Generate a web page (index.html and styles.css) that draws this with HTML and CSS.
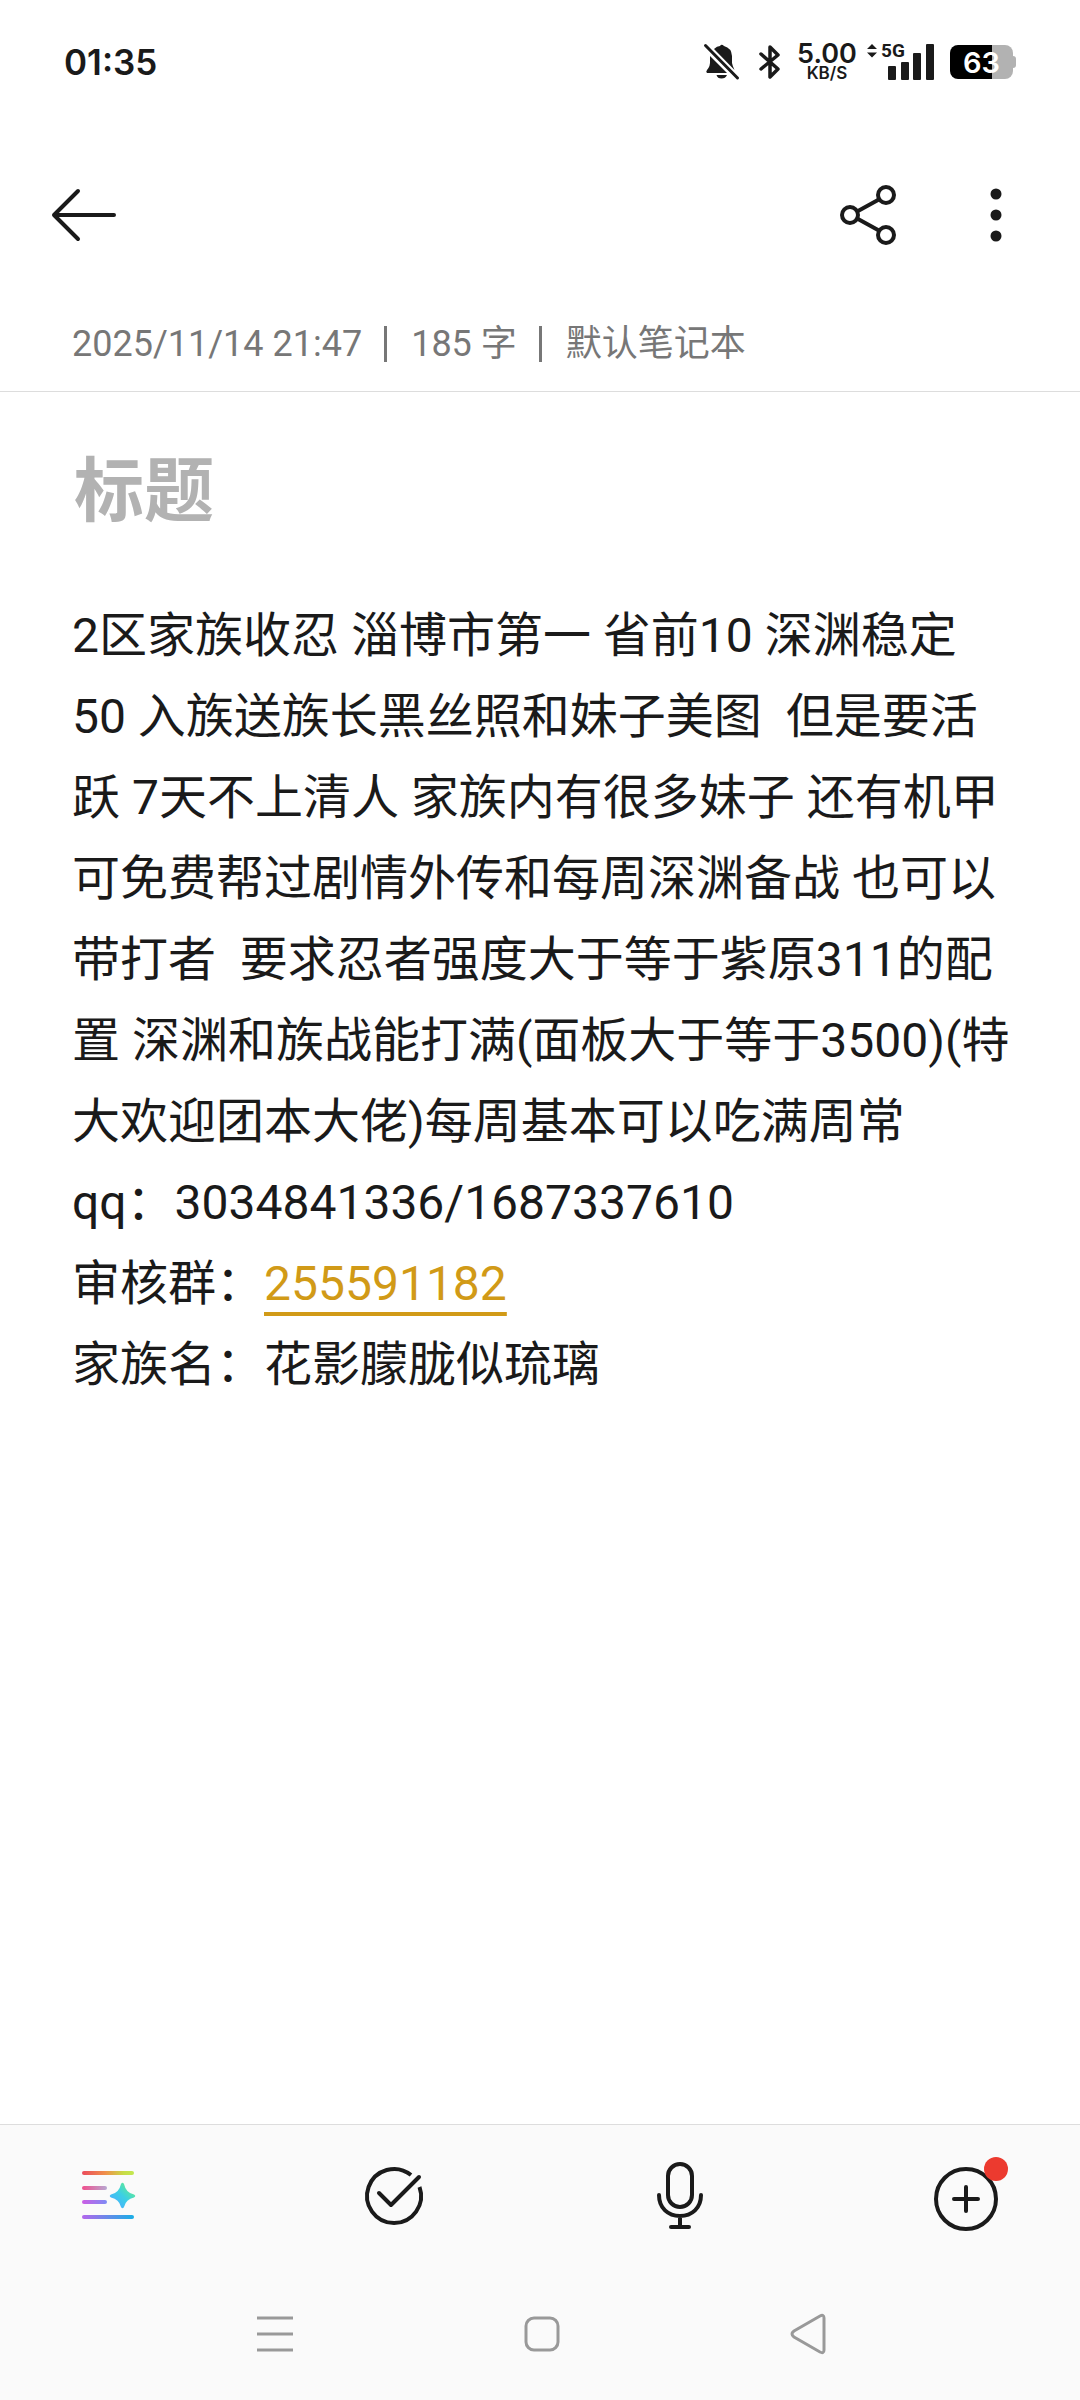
FILE: index.html
```html
<!DOCTYPE html>
<html lang="zh-CN">
<head>
<meta charset="utf-8">
<meta name="viewport" content="width=device-width, initial-scale=1">
<title>笔记</title>
<link rel="stylesheet" href="styles.css">
</head>
<body>
<div class="status">
  <time class="clock">01:35</time>
  <div class="status-icons">
    <svg class="bell" viewBox="0 0 36 36" aria-hidden="true">
      <path d="M10 5Q13 2 16 2Q17.500 -.5 20 2Q27.500 4 28 12V19Q28.500 22 30.500 26ZM6 12L23 29H3Q1.500 28 3 26Q6.500 22 6 17ZM12.500 31H23Q21.500 34.500 17.500 34.500T12.500 31Z" fill="#1a1a1a"/>
      <path d="M1.500 1.500L33.500 34" stroke="#1a1a1a" stroke-width="3" stroke-linecap="round"/>
    </svg>
    <svg class="bluetooth" viewBox="0 0 22 38" aria-hidden="true">
      <path d="M2 11L19 26L11 34V4L19 12L2 26" fill="none" stroke="#1a1a1a" stroke-width="3.500" stroke-linejoin="round" stroke-linecap="round"/>
    </svg>
    <div class="speed"><span class="speed-value">5.00</span><span class="speed-unit">KB/S</span></div>
    <div class="signal">
      <svg class="signal-bars" viewBox="0 0 68 38" aria-hidden="true">
        <path d="M1 6L6 1L11 6ZM1 9.500H11L6 14.500Z" fill="#1a1a1a"/>
        <g fill="#1a1a1a"><rect x="22" y="23" width="8" height="14" rx="1"/><rect x="35" y="19" width="8" height="18" rx="1"/><rect x="47" y="10" width="8" height="27" rx="1"/><rect x="60" y="1" width="8" height="36" rx="1"/></g>
      </svg>
      <span class="network">5G</span>
    </div>
    <div class="battery">63</div>
  </div>
</div>

<header class="header">
  <button class="icon-button" type="button" aria-label="返回">
    <svg viewBox="0 0 72 72"><path d="M66 36H6M30 12L6 36L30 60" class="line"/></svg>
  </button>
  <div class="header-actions">
    <button class="icon-button" type="button" aria-label="分享">
      <svg viewBox="0 0 72 72"><g class="line"><circle cx="18" cy="36" r="8"/><circle cx="54" cy="16" r="8"/><circle cx="54" cy="56" r="8"/><path d="M26 32L46 21M26 40L46 51"/></g></svg>
    </button>
    <button class="icon-button" type="button" aria-label="更多">
      <svg viewBox="0 0 72 72"><g fill="#1a1a1a"><circle cx="36" cy="15" r="5.500"/><circle cx="36" cy="36" r="5.500"/><circle cx="36" cy="57" r="5.500"/></g></svg>
    </button>
  </div>
</header>

<div class="meta">
  <time>2025/11/14 21:47</time>
  <span class="meta-item">185 字</span>
  <span class="meta-item">默认笔记本</span>
</div>

<main class="note">
  <input class="title" type="text" placeholder="标题" aria-label="标题">
  <p class="content">2区家族收忍 淄博市第一 省前10 深渊稳定
50 入族送族长黑丝照和妹子美图  但是要活
跃 7天不上清人 家族内有很多妹子 还有机甲
可免费帮过剧情外传和每周深渊备战 也可以
带打者  要求忍者强度大于等于紫原311的配
置 深渊和族战能打满(面板大于等于3500)(特
大欢迎团本大佬)每周基本可以吃满周常
qq：3034841336/1687337610
审核群：<a href="#">255591182</a>
家族名：花影朦胧似琉璃</p>
</main>

<footer class="footer">
  <div class="tools">
    <button class="icon-button" type="button" aria-label="智能排版">
      <svg viewBox="0 0 72 72">
        <defs>
          <linearGradient id="warm" gradientUnits="userSpaceOnUse" x1="10" x2="62" y1="0" y2="0"><stop stop-color="#eb4b5c"/><stop offset=".45" stop-color="#f0904a"/><stop offset=".8" stop-color="#c8dc46"/><stop offset="1" stop-color="#c2e850"/></linearGradient>
          <linearGradient id="pink" gradientUnits="userSpaceOnUse" x1="10" x2="35" y1="0" y2="0"><stop stop-color="#f04f8c"/><stop offset="1" stop-color="#b8a8d2"/></linearGradient>
          <linearGradient id="violet" gradientUnits="userSpaceOnUse" x1="10" x2="35" y1="0" y2="0"><stop stop-color="#cc5de4"/><stop offset="1" stop-color="#7d8bf5"/></linearGradient>
          <linearGradient id="cool" gradientUnits="userSpaceOnUse" x1="10" x2="62" y1="0" y2="0"><stop stop-color="#b466ec"/><stop offset="1" stop-color="#18afe6"/></linearGradient>
          <linearGradient id="spark" x1="0" x2="1" y1="1" y2="0"><stop offset=".2" stop-color="#46b4fa"/><stop offset=".5" stop-color="#3cd0e4"/><stop offset=".8" stop-color="#5ce69e"/></linearGradient>
        </defs>
        <rect x="10" y="11" width="52" height="4" rx="2" fill="url(#warm)"/>
        <rect x="10" y="26" width="25" height="4" rx="2" fill="url(#pink)"/>
        <rect x="10" y="40" width="25" height="4" rx="2" fill="url(#violet)"/>
        <rect x="10" y="55" width="52" height="4" rx="2" fill="url(#cool)"/>
        <path d="M49 24Q50.500 21.500 52 24Q54 33 62 34.500Q64.500 36 62 37.500Q54 39 52 47Q50.500 49.500 49 47Q47 39 39 37.500Q36.500 36 39 34.500Q47 33 49 24Z" fill="url(#spark)"/>
      </svg>
    </button>
    <button class="icon-button" type="button" aria-label="待办">
      <svg viewBox="0 0 72 72"><g class="line"><path d="M53 15A27 27 0 1 0 61.500 27" stroke-linecap="butt"/><path d="M21 33L33 45L61 17"/></g></svg>
    </button>
    <button class="icon-button" type="button" aria-label="录音">
      <svg viewBox="0 0 72 72"><g class="line"><rect x="24" y="4" width="24" height="43" rx="12"/><path d="M15 35C15 48 24 56 36 56S57 48 57 35M36 56V67M27 67H45"/></g></svg>
    </button>
    <button class="icon-button" type="button" aria-label="添加">
      <svg viewBox="0 0 72 72"><g class="line"><circle cx="36" cy="39" r="30"/><path d="M24 39H48M36 27V51"/></g></svg>
      <span class="badge"></span>
    </button>
  </div>
  <nav class="system-nav" aria-label="系统导航">
    <button type="button" aria-label="最近任务"><svg viewBox="0 0 36 44"><path d="M0 6H36M0 22H36M0 38H36"/></svg></button>
    <button type="button" aria-label="主屏幕"><svg viewBox="0 0 36 44"><rect x="2" y="6" width="32" height="32" rx="8"/></svg></button>
    <button type="button" aria-label="后退"><svg viewBox="0 0 36 44"><path d="M29 4Q33 2 33 6V38Q33 42 29 40L3 25Q-1 22 3 19Z"/></svg></button>
  </nav>
</footer>
</body>
</html>
```

FILE: styles.css
```css
* { box-sizing: border-box; }

body {
  margin: 0;
  min-height: 100vh;
  display: flex;
  flex-direction: column;
  background: #fff;
  color: #1a1a1a;
  font-family: Roboto, "Noto Sans CJK SC", sans-serif;
}

button {
  padding: 0;
  border: 0;
  background: none;
  position: relative;
}

svg { display: block; overflow: visible; }

.line {
  fill: none;
  stroke: #1a1a1a;
  stroke-width: 4;
  stroke-linecap: round;
  stroke-linejoin: round;
}

.status {
  height: 124px;
  padding: 0 64px;
  display: flex;
  align-items: center;
  justify-content: space-between;
  font-family: Inter, Roboto, sans-serif;
  font-weight: 600;
}

.clock { font-size: 35px; }

.status-icons {
  display: flex;
  align-items: center;
}

.bell { width: 36px; height: 36px; }
.bluetooth { width: 22px; height: 38px; margin-left: 19px; }

.speed {
  width: 60px;
  margin-left: 16px;
  display: flex;
  flex-direction: column;
  align-items: center;
}

.speed-value { font-size: 27px; line-height: 22px; }
.speed-unit { font-size: 17px; line-height: 16px; }

.signal {
  position: relative;
  margin-left: 9px;
}

.signal-bars { width: 68px; height: 38px; }

.network {
  position: absolute;
  left: 15px;
  top: 0;
  font: 700 19px/16px "Liberation Sans Narrow", Roboto, sans-serif;
}

.battery {
  position: relative;
  width: 63px;
  height: 34px;
  margin: 0 3px 0 16px;
  border-radius: 8px;
  background: linear-gradient(to right, #000 42px, #b2b2b2 42px);
  color: #fff;
  font-size: 29px;
  line-height: 35px;
  text-align: center;
}

.battery::after {
  content: "";
  position: absolute;
  left: 63px;
  top: 11px;
  width: 3px;
  height: 12px;
  border-radius: 0 3px 3px 0;
  background: #b2b2b2;
}

.header {
  height: 182px;
  padding: 0 48px;
  display: flex;
  align-items: center;
  justify-content: space-between;
}

.header-actions { display: flex; gap: 56px; }

.icon-button, .icon-button svg { width: 72px; height: 72px; }

.meta {
  height: 86px;
  padding: 0 72px 10px;
  display: flex;
  align-items: center;
  border-bottom: 1px solid #ddd;
  color: #777;
  font-size: 36px;
  line-height: 36px;
}

.meta-item {
  margin-left: 22px;
  padding-left: 24px;
  border-left: 3px solid #777;
}

.note {
  flex: 1;
  padding: 48px 72px;
}

.title {
  display: block;
  width: 100%;
  height: 104px;
  padding: 0 2px;
  border: 0;
  outline: 0;
  background: none;
  font: 700 70px/104px Roboto, "Noto Sans CJK SC", sans-serif;
}

.title::placeholder { color: #b2b2b2; opacity: 1; }

.content {
  margin: 51px 0 0;
  font-size: 48px;
  line-height: 81px;
  white-space: pre;
}

.content a {
  color: #d19a17;
  text-decoration: underline 4px;
  text-underline-offset: 12px;
}

.footer {
  border-top: 1px solid #ddd;
  background: #fafafa;
}

.tools {
  padding: 35px 78px 35px 72px;
  display: flex;
  justify-content: space-between;
}

.badge {
  position: absolute;
  left: 54px;
  top: -3px;
  width: 24px;
  height: 24px;
  border-radius: 50%;
  background: #ec3a2f;
}

.system-nav {
  height: 133px;
  padding: 0 253px 0 257px;
  display: flex;
  align-items: center;
  justify-content: space-between;
}

.system-nav svg {
  width: 36px;
  height: 44px;
  fill: none;
  stroke: #999;
  stroke-width: 3;
}
```
